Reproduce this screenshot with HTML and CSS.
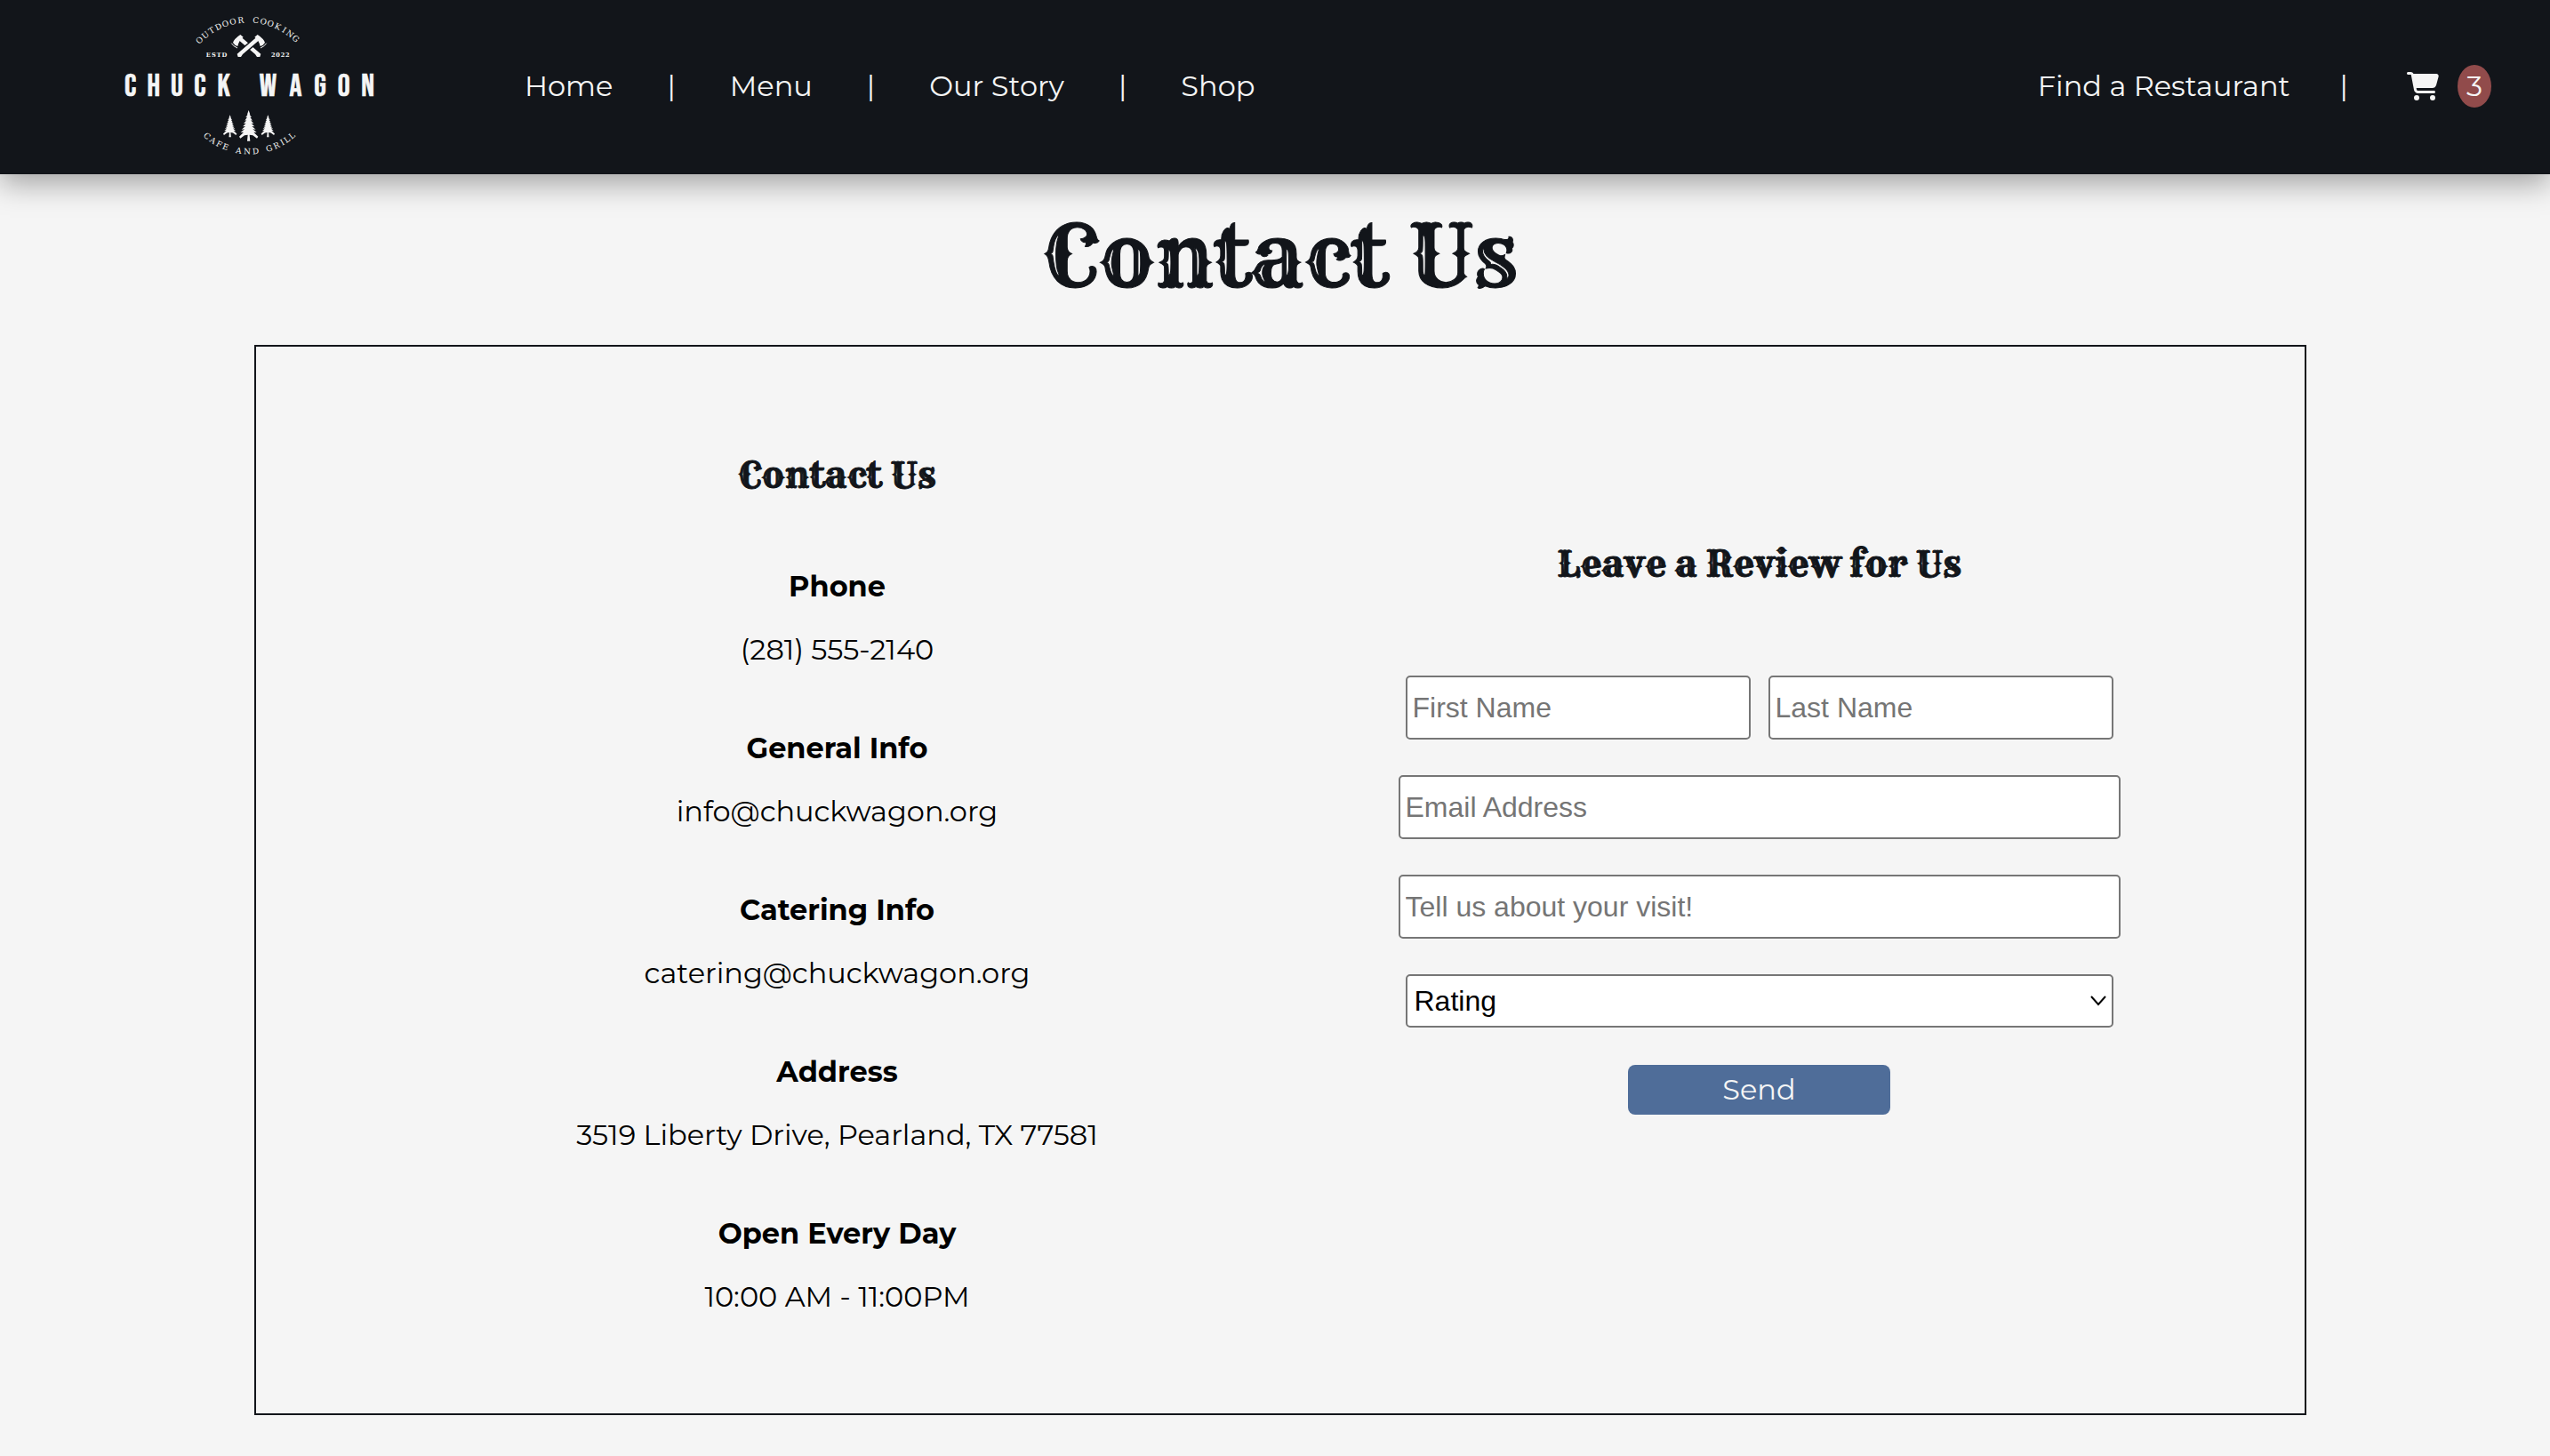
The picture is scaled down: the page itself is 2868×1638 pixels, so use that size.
FILE: index.html
```html
<!DOCTYPE html>
<html lang="en">
<head>
<meta charset="utf-8">
<title>Contact Us | Chuck Wagon</title>
<meta name="viewport" content="width=device-width, initial-scale=1">
<link rel="stylesheet" href="styles.css">
</head>
<body>
<header class="site-header">
  <a class="logo" href="#" aria-label="Chuck Wagon home">
    <svg viewBox="0 0 960 588" width="320" height="196" fill="currentColor">
      <defs>
        <path id="arc-top" d="M306 158A222 222 0 0 1 650 158"/>
        <path id="arc-bottom" d="M315 450A231 231 0 0 0 647 450"/>
        <g id="axe">
          <path d="M-38-28L-30-34L41 27L38 37L28 37L22 28L-34-20Z"/>
          <path d="M-53-11Q-49-24-28-38L-18-30Q-33-19-37 1Q-47-1-53-11Z"/>
          <path d="M-58-9Q-51 2-38 7" fill="none" stroke="currentColor" stroke-width="3"/>
        </g>
        <path id="tree" d="M0-52L5-38L3-38L10-28L5-29L13-17L7-18L17-7L9-8L20 3L11 2L24 13L14 12L27 23L17 22L32 37L28 43L14 33L3 31L5 52H-5L-3 31L-14 33L-28 43L-32 37L-17 22L-27 23L-14 12L-24 13L-11 2L-20 3L-9-8L-17-7L-7-18L-13-17L-5-29L-10-28L-3-38L-5-38Z"/>
      </defs>
      <text class="logo-arc" x="21 46 71 96 121 146 172 197 221 246 270 295 319 341 365"><textPath href="#arc-top">OUTDOOR COOKING</textPath></text>
      <use href="#axe" x="479" y="155"/>
      <g transform="translate(481 155) scale(-1 1)"><path class="logo-cut" d="M-8-6L26 22"/><use href="#axe"/></g>
      <text class="logo-date" y="191" x="343 361 379 397">ESTD</text>
      <text class="logo-date" y="191" x="562 578 594 610">2022</text>
      <text class="logo-name" y="323" x="80 158 237 315 395 470 544 637 720 800 881">CHUCK WAGON</text>
      <use href="#tree" x="479" y="424"/>
      <use href="#tree" transform="translate(416 425) scale(.72)"/>
      <use href="#tree" transform="translate(544 425) scale(.72)"/>
      <text class="logo-arc" x="24 50 75 100 122 148 178 208 232 256 284 307 326 348"><textPath href="#arc-bottom">CAFE AND GRILL</textPath></text>
    </svg>
  </a>
  <nav class="nav" aria-label="Main">
    <a href="#">Home</a><span>|</span>
    <a href="#">Menu</a><span>|</span>
    <a href="#">Our Story</a><span>|</span>
    <a href="#">Shop</a>
  </nav>
  <nav class="nav nav-end" aria-label="Visit and cart">
    <a href="#">Find a Restaurant</a><span>|</span>
    <a class="cart" href="#" aria-label="Cart, 3 items">
      <svg viewBox="0 0 576 512" width="36" height="32" fill="currentColor"><path d="M0 24C0 10.700 10.700 0 24 0H69.500c22 0 41.500 12.800 50.600 32h411c26.300 0 45.500 25 38.600 50.400l-41 152.300c-8.500 31.400-37 53.300-69.500 53.300H170.700l5.400 28.500c2.200 11.300 12.100 19.500 23.600 19.500H488c13.300 0 24 10.700 24 24s-10.700 24-24 24H199.700c-34.600 0-64.300-24.600-70.700-58.500L77.400 54.500c-.7-3.800-4-6.500-7.900-6.500H24C10.700 48 0 37.300 0 24zM128 464a48 48 0 1 1 96 0 48 48 0 1 1-96 0zm336-48a48 48 0 1 1 0 96 48 48 0 1 1 0-96z"/></svg>
      <span class="cart-count">3</span>
    </a>
  </nav>
</header>
<main class="page">
  <h1>Contact Us</h1>
  <div class="panel">
    <section class="info">
      <h2>Contact Us</h2>
      <dl>
        <dt>Phone</dt><dd>(281) 555-2140</dd>
        <dt>General Info</dt><dd>info@chuckwagon.org</dd>
        <dt>Catering Info</dt><dd>catering@chuckwagon.org</dd>
        <dt>Address</dt><dd>3519 Liberty Drive, Pearland, TX 77581</dd>
        <dt>Open Every Day</dt><dd>10:00 AM - 11:00PM</dd>
      </dl>
    </section>
    <section class="review">
      <h2>Leave a Review for Us</h2>
      <form>
        <div class="row">
          <input type="text" aria-label="First Name" placeholder="First Name">
          <input type="text" aria-label="Last Name" placeholder="Last Name">
        </div>
        <input type="email" aria-label="Email Address" placeholder="Email Address">
        <input type="text" aria-label="Tell us about your visit!" placeholder="Tell us about your visit!">
        <div class="row select">
          <select aria-label="Rating"><option>Rating</option><option>1</option><option>2</option><option>3</option><option>4</option><option>5</option></select>
          <svg class="chevron" viewBox="0 0 18 12" width="18" height="12" fill="none" stroke="currentColor" stroke-width="2"><path d="M1 1L9 10L17 1"/></svg>
        </div>
        <button type="submit">Send</button>
      </form>
    </section>
  </div>
</main>
</body>
</html>
```

FILE: styles.css
```css
* { box-sizing: border-box; }

body {
  margin: 0;
  background: #f5f5f5;
  color: #000;
  font: 32px/40px Montserrat, Inter, sans-serif;
}

a { color: inherit; text-decoration: none; }

.site-header {
  position: relative;
  display: flex;
  align-items: center;
  padding: 0 66px 0 120px;
  background: #12151a;
  color: #f5f5f5;
  box-shadow: 0 10px 32px rgba(0, 0, 0, .35);
}

.logo { display: block; margin-right: 150px; }
.logo svg { display: block; }
.logo text { text-anchor: middle; }
.logo-arc { font: 500 27px "Roboto Slab", "DejaVu Serif", serif; }
.logo-date { font: bold 20px "Roboto Slab", "DejaVu Serif", serif; }
.logo-name {
  font: 104px "Bebas Neue", "Liberation Sans Narrow", "Roboto Condensed", sans-serif;
  stroke: currentColor;
  stroke-width: 2px;
}
.logo-cut { stroke: #12151a; stroke-width: 22px; }

.nav {
  display: flex;
  align-items: center;
  gap: 61px;
  padding-bottom: 2px;
}
.nav-end { gap: 56px; margin-left: auto; }

.cart { display: flex; align-items: center; gap: 21px; margin-left: 10px; }
.cart-count {
  padding: 4px 10px;
  border-radius: 50%;
  background: #914b4b;
}

.page { padding: 36px 274px 46px 286px; }

h1, h2 {
  margin: 0;
  color: #12151a;
  font-family: Rye, "Liberation Serif", serif;
  font-weight: normal;
  text-align: center;
  -webkit-text-stroke: 1px;
}
h1 { font-size: 96px; line-height: 112px; }
h2 { font-size: 40px; line-height: 56px; }

.panel {
  display: grid;
  grid-template-columns: 1fr 1fr;
  align-items: start;
  margin-top: 44px;
  padding: 117px 95px 111px 135px;
  border: 2px solid #12151a;
}

.info { text-align: center; }
dl { margin: 77px 0 0; }
dt { font-weight: bold; }
dd { margin: 31px 0 71px; }
dd:last-child { margin-bottom: 0; }

.review { margin-top: 100px; }
form {
  display: flex;
  flex-direction: column;
  align-items: center;
  gap: 40px;
  width: 812px;
  max-width: 100%;
  margin: 97px auto 0;
}
.row { display: flex; gap: 20px; width: 100%; padding: 0 8px; }

input, select {
  flex: 1;
  width: 100%;
  min-width: 0;
  border: 2px solid #767676;
  border-radius: 5px;
  background: #fff;
  color: #000;
  font: 32px/36px Arial, "Liberation Sans", sans-serif;
}
input { flex-basis: auto; padding: 16px 6px; height: 72px; }
input::placeholder { color: #757575; }
select { height: 60px; padding: 0 8px; appearance: none; }
.select { position: relative; }
.chevron { position: absolute; right: 16px; top: 24px; pointer-events: none; }

button {
  width: 295px;
  margin-top: 2px;
  padding: 8px;
  border: 0;
  border-radius: 8px;
  background: #4f6d99;
  color: #f5f5f5;
  font: inherit;
}
```
